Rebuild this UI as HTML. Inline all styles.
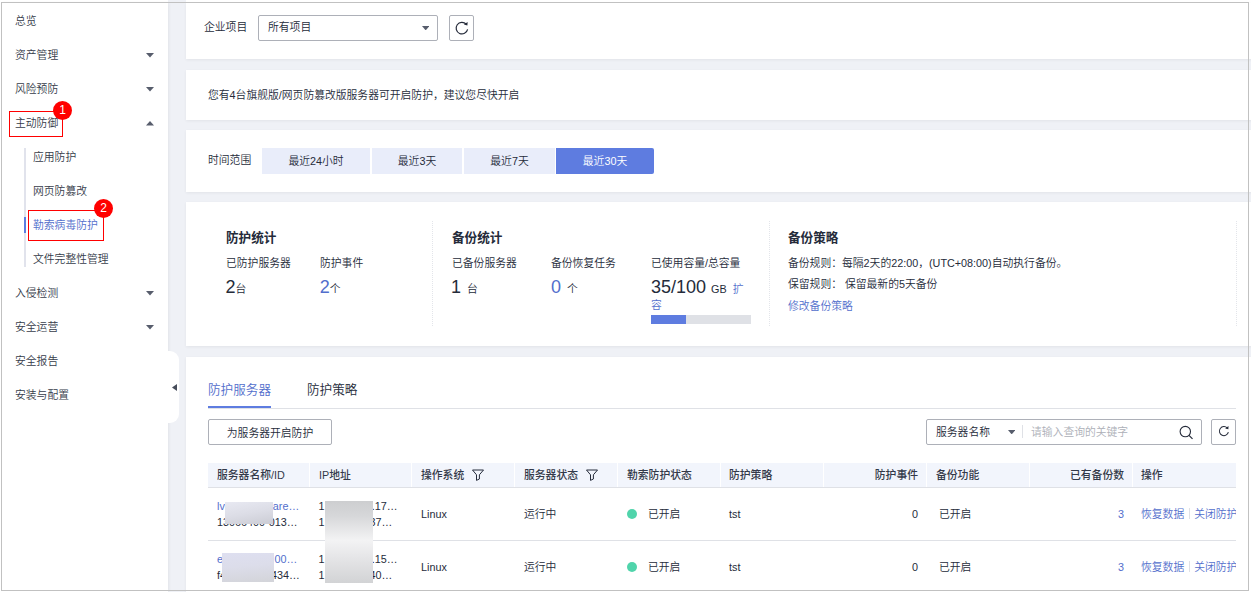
<!DOCTYPE html>
<html lang="zh-CN">
<head>
<meta charset="utf-8">
<title>勒索病毒防护</title>
<style>
*{box-sizing:border-box;margin:0;padding:0}
html,body{width:1251px;height:592px;overflow:hidden;background:#fff}
body{position:relative;font-weight:350;font-family:"Liberation Sans","Noto Sans CJK SC",sans-serif;font-size:10.8px;color:#252b3a;line-height:16px}
.a{position:absolute;white-space:nowrap}
#frame{left:1px;top:2px;width:1248px;height:589px;border:1px solid #c1c1c1;z-index:50;pointer-events:none}
#main{left:168px;top:3px;width:1083px;height:589px;background:#eff1f6;box-shadow:0 -3px 0 #eff1f6}
#side{left:2px;top:3px;width:166px;height:589px;background:#fff;box-shadow:1px 0 3px rgba(0,0,0,.06),0 -3px 0 #fff;z-index:5}
.panel{position:absolute;left:18px;width:1070px;background:#fff;box-shadow:0 1px 3px rgba(0,0,0,.06)}
.t{position:absolute;white-space:nowrap;height:16px;line-height:16px}
.blue,.m.blue{color:#526ecc}
.m{position:absolute;left:13px;height:16px;line-height:16px;white-space:nowrap;color:#363c4a}
.m2{left:31px}
.arr{position:absolute;left:144px;width:0;height:0;border-left:4px solid transparent;border-right:4px solid transparent}
.dn{border-top:4px solid #575d6c}
.up{border-bottom:4px solid #575d6c}
.rbox{position:absolute;border:1px solid #f00}
.badge{position:absolute;width:19px;height:19px;border-radius:50%;background:#f00;color:#fff;font-size:12px;font-weight:400;line-height:19px;text-align:center}

.tb{position:absolute;top:18px;height:26px;line-height:26px;text-align:center;background:#e9edfa;color:#252b3a;white-space:nowrap}
.tb.on{background:#5e7ce0;color:#fff;border-radius:0 2px 2px 0}
.vd{position:absolute;top:19px;width:0;height:105px;border-left:1px dotted #e3e5ea}
.h{font-size:12.6px;font-weight:bold}
.big{font-size:18px;height:22px;line-height:22px}
.big .u{font-size:10.8px}
.bl{color:#526ecc}

.tab{font-size:12.6px;height:18px;line-height:18px}
.th{font-weight:500;color:#333949}
.cs{position:absolute;top:0;width:1px;height:24px;background:#fff}
.dot{position:absolute;width:10px;height:10px;border-radius:50%;background:#50d4ab}
.sp{display:inline-block;width:1px;height:11px;background:#dfe1e6;margin:0 4px 0 5px;vertical-align:-1px}
.m.blue{color:#526ecc}
</style>
</head>
<body>
<div class="a" id="side">
  <div class="m" style="top:10px">总览</div>
  <div class="m" style="top:44px">资产管理</div><svg class="a" style="left:144px;top:50px" width="8" height="4.5" viewBox="0 0 8 4.5"><polygon points="0,0 8,0 4.0,4.5" fill="#575d6c"/></svg>
  <div class="m" style="top:78px">风险预防</div><svg class="a" style="left:144px;top:84px" width="8" height="4.5" viewBox="0 0 8 4.5"><polygon points="0,0 8,0 4.0,4.5" fill="#575d6c"/></svg>
  <div class="m" style="top:112px">主动防御</div><svg class="a" style="left:144px;top:118px" width="8" height="4.5" viewBox="0 0 8 4.5"><polygon points="0,4.5 8,4.5 4.0,0" fill="#575d6c"/></svg>
  <div class="a" style="left:22px;top:145px;width:2px;height:119px;background:#e1e3ec"></div>
  <div class="a" style="left:22px;top:214px;width:2px;height:16px;background:#5e7ce0"></div>
  <div class="m m2" style="top:146px">应用防护</div>
  <div class="m m2" style="top:180px">网页防篡改</div>
  <div class="m m2 blue" style="top:214px">勒索病毒防护</div>
  <div class="m m2" style="top:248px">文件完整性管理</div>
  <div class="m" style="top:282px">入侵检测</div><svg class="a" style="left:144px;top:288px" width="8" height="4.5" viewBox="0 0 8 4.5"><polygon points="0,0 8,0 4.0,4.5" fill="#575d6c"/></svg>
  <div class="m" style="top:316px">安全运营</div><svg class="a" style="left:144px;top:322px" width="8" height="4.5" viewBox="0 0 8 4.5"><polygon points="0,0 8,0 4.0,4.5" fill="#575d6c"/></svg>
  <div class="m" style="top:350px">安全报告</div>
  <div class="m" style="top:384px">安装与配置</div>
  <div class="rbox" style="left:7px;top:108px;width:54px;height:26px"></div>
  <div class="badge" style="left:51px;top:98px">1</div>
  <div class="rbox" style="left:26px;top:207px;width:76px;height:31px"></div>
  <div class="badge" style="left:92px;top:196px">2</div>
</div>
<div class="a" id="main">
  <!-- collapse handle -->
  <div class="a" style="left:0;top:348px;width:11px;height:72px;background:#fff;border-radius:0 9px 9px 0;z-index:6"></div>
  <svg class="a" style="left:3.5px;top:380.5px;z-index:7" width="5" height="7" viewBox="0 0 5 7"><polygon points="5,0 5,7 0,3.5" fill="#474d5b"/></svg>

  <div class="panel" id="p1" style="top:0;height:56px;box-shadow:0 1px 3px rgba(0,0,0,.06),0 -3px 0 #fff">
    <div class="t" style="left:18px;top:16px">企业项目</div>
    <div class="a" style="left:72px;top:12px;width:180px;height:26px;border:1px solid #adb0b8;border-radius:2px"></div>
    <div class="t" style="left:82px;top:16px">所有项目</div>
    <svg class="a" style="left:235.8px;top:23px" width="7.4" height="4.4" viewBox="0 0 7.4 4.4"><polygon points="0,0 7.4,0 3.7,4.4" fill="#575d6c"/></svg>
    <div class="a" style="left:263px;top:12px;width:25px;height:26px;border:1px solid #adb0b8;border-radius:2px"></div>
    <svg class="a" style="left:267px;top:16px" width="18" height="18" viewBox="0 0 18 18"><path d="M13.2 5.2 A5.8 5.8 0 1 0 14.6 10.4" fill="none" stroke="#252b3a" stroke-width="1.2"/><path d="M14.6 3.0 L14.4 6.6 L10.9 5.6 Z" fill="#252b3a"/></svg>
  </div>

  <div class="panel" id="p2" style="top:67px;height:50px">
    <div class="t" style="left:22px;top:17px">您有4台旗舰版/网页防篡改版服务器可开启防护，建议您尽快开启</div>
  </div>

  <div class="panel" id="p3" style="top:127px;height:62px">
    <div class="t" style="left:22px;top:22px">时间范围</div>
    <div class="tb" style="left:76px;width:108px">最近24小时</div>
    <div class="tb" style="left:186px;width:90px">最近3天</div>
    <div class="tb" style="left:278px;width:91px">最近7天</div>
    <div class="tb on" style="left:370px;width:98px">最近30天</div>
  </div>

  <div class="panel" id="p4" style="top:199px;height:144px">
    <div class="vd" style="left:246px"></div><div class="vd" style="left:583px"></div><div class="vd" style="left:1050px"></div>
    <div class="t h" style="left:40px;top:28px">防护统计</div>
    <div class="t" style="left:40px;top:53px">已防护服务器</div>
    <div class="t" style="left:134px;top:53px">防护事件</div>
    <div class="t big" style="left:39.6px;top:74px">2<span class="u">台</span></div>
    <div class="t big" style="left:133.7px;top:74px"><span class="bl">2</span><span class="u">个</span></div>
    <div class="t h" style="left:266px;top:28px">备份统计</div>
    <div class="t" style="left:266px;top:53px">已备份服务器</div>
    <div class="t" style="left:365px;top:53px">备份恢复任务</div>
    <div class="t" style="left:465px;top:53px">已使用容量/总容量</div>
    <div class="t big" style="left:265px;top:74px">1<span class="u" style="margin-left:6px">台</span></div>
    <div class="t big" style="left:365px;top:74px"><span class="bl">0</span><span class="u" style="margin-left:6px">个</span></div>
    <div class="t big" style="left:465px;top:74px">35/100<span class="u" style="margin-left:5px">GB</span><span class="u blue" style="margin-left:6px">扩</span></div>
    <div class="t blue" style="left:465px;top:95px">容</div>
    <div class="a" style="left:465px;top:113px;width:100px;height:9px;background:#dfe1e6"><div style="width:35px;height:9px;background:#5e7ce0"></div></div>
    <div class="t h" style="left:602px;top:28px">备份策略</div>
    <div class="t" style="left:602px;top:53px">备份规则：每隔2天的22:00，(UTC+08:00)自动执行备份。</div>
    <div class="t" style="left:602px;top:74px">保留规则：<span style="margin-left:3px">保留最新的5天备份</span></div>
    <div class="t blue" style="left:602px;top:96px">修改备份策略</div>
  </div>

  <div class="panel" id="p5" style="top:354px;height:240px">
    <div class="t tab blue" style="left:22px;top:24px">防护服务器</div>
    <div class="t tab" style="left:121px;top:24px">防护策略</div>
    <div class="a" style="left:22px;top:51px;width:1028px;height:1px;background:#dfe1e6"></div>
    <div class="a" style="left:22px;top:49px;width:63px;height:2px;background:#5e7ce0"></div>
    <div class="a" style="left:22px;top:62px;width:124px;height:26px;line-height:24px;padding-top:1px;border:1px solid #adb0b8;border-radius:2px;text-align:center">为服务器开启防护</div>
    <!-- search -->
    <div class="a" style="left:740px;top:62px;width:276px;height:26px;border:1px solid #adb0b8;border-radius:2px"></div>
    <div class="t" style="left:750px;top:67px">服务器名称</div>
    <svg class="a" style="left:821.8px;top:73px" width="7.4" height="4.4" viewBox="0 0 7.4 4.4"><polygon points="0,0 7.4,0 3.7,4.4" fill="#575d6c"/></svg>
    <div class="a" style="left:836px;top:68px;width:1px;height:13px;background:#dfe1e6"></div>
    <div class="t" style="left:845px;top:67px;color:#adb0b8">请输入查询的关键字</div>
    <svg class="a" style="left:992px;top:67px" width="16" height="16" viewBox="0 0 16 16"><circle cx="7.3" cy="7.6" r="5.2" fill="none" stroke="#252b3a" stroke-width="1.1"/><path d="M11 11.4 L14.5 14.9" stroke="#252b3a" stroke-width="1.2" fill="none"/></svg>
    <div class="a" style="left:1025px;top:62px;width:25px;height:26px;border:1px solid #adb0b8;border-radius:2px"></div>
    <svg class="a" style="left:1031px;top:67px" width="14" height="14" viewBox="0 0 18 18"><path d="M13.2 5.2 A5.8 5.8 0 1 0 14.6 10.4" fill="none" stroke="#252b3a" stroke-width="1.3"/><path d="M14.8 2.6 L14.6 6.9 L10.5 5.7 Z" fill="#252b3a"/></svg>
    <!-- table -->
    <div class="a" id="tbl" style="left:22px;top:106px;width:1028px;height:140px;overflow:hidden">
      <div class="a" style="left:0;top:0;width:1028px;height:24px;background:#f2f5fc"></div>
      <div class="a" style="left:0;top:24px;width:1028px;height:1px;background:#dfe1e6"></div>
      <div class="a" style="left:0;top:77px;width:1028px;height:1px;background:#dfe1e6"></div>
      <i class="cs" style="left:101px"></i><i class="cs" style="left:203px"></i><i class="cs" style="left:306px"></i><i class="cs" style="left:409px"></i><i class="cs" style="left:512px"></i><i class="cs" style="left:615px"></i><i class="cs" style="left:718px"></i><i class="cs" style="left:821px"></i><i class="cs" style="left:924px"></i>
      <div class="t th" style="left:9px;top:4px">服务器名称/ID</div>
      <div class="t th" style="left:111px;top:4px">IP地址</div>
      <div class="t th" style="left:213px;top:4px">操作系统</div>
      <div class="t th" style="left:316px;top:4px">服务器状态</div>
      <div class="t th" style="left:419px;top:4px">勒索防护状态</div>
      <div class="t th" style="left:521px;top:4px">防护策略</div>
      <div class="t th" style="right:318px;top:4px">防护事件</div>
      <div class="t th" style="left:728px;top:4px">备份功能</div>
      <div class="t th" style="right:112px;top:4px">已有备份数</div>
      <div class="t th" style="left:933px;top:4px">操作</div>
      <svg class="a" style="left:264px;top:6px" width="12" height="12" viewBox="0 0 12 12"><path d="M0.5 1 H11.5 L7.4 5.8 V10 L4.5 11.4 V5.8 Z" fill="none" stroke="#252b3a" stroke-width="1"/></svg>
      <svg class="a" style="left:378px;top:6px" width="12" height="12" viewBox="0 0 12 12"><path d="M0.5 1 H11.5 L7.4 5.8 V10 L4.5 11.4 V5.8 Z" fill="none" stroke="#252b3a" stroke-width="1"/></svg>
      <!-- row 1 -->
      <div class="t blue" style="left:9px;top:35px">lv<span style="margin-left:48px">are…</span></div>
      <div class="t" style="left:9px;top:51px">13066400-013…</div>
      <div class="t" style="left:110.5px;top:35px">1<span style="margin-left:47.3px">.17…</span></div>
      <div class="t" style="left:110.5px;top:51px">1<span style="margin-left:45.1px">37…</span></div>
      <div class="t" style="left:213px;top:43px">Linux</div>
      <div class="t" style="left:316px;top:43px">运行中</div>
      <div class="dot" style="left:419px;top:46px"></div>
      <div class="t" style="left:440px;top:43px">已开启</div>
      <div class="t" style="left:521px;top:43px">tst</div>
      <div class="t" style="right:318px;top:43px">0</div>
      <div class="t" style="left:731px;top:43px">已开启</div>
      <div class="t blue" style="right:112px;top:43px">3</div>
      <div class="t blue" style="left:933px;top:43px">恢复数据<span class="sp"></span>关闭防护</div>
      <!-- row 2 -->
      <div class="t blue" style="left:9px;top:88px">e<span style="margin-left:51.4px">00…</span></div>
      <div class="t" style="left:9px;top:104px">f4<span style="margin-left:44.9px">434…</span></div>
      <div class="t" style="left:110.5px;top:88px">1<span style="margin-left:47.3px">.15…</span></div>
      <div class="t" style="left:110.5px;top:104px">1<span style="margin-left:45.1px">40…</span></div>
      <div class="t" style="left:213px;top:96px">Linux</div>
      <div class="t" style="left:316px;top:96px">运行中</div>
      <div class="dot" style="left:419px;top:99px"></div>
      <div class="t" style="left:440px;top:96px">已开启</div>
      <div class="t" style="left:521px;top:96px">tst</div>
      <div class="t" style="right:318px;top:96px">0</div>
      <div class="t" style="left:731px;top:96px">已开启</div>
      <div class="t blue" style="right:112px;top:96px">3</div>
      <div class="t blue" style="left:933px;top:96px">恢复数据<span class="sp"></span>关闭防护</div>
      <!-- blur masks -->
      <div class="a" style="left:17px;top:39px;width:48px;height:22px;background:linear-gradient(170deg,#e8e9f2,#dcdde6 50%,#cbccd4)"></div>
      <div class="a" style="left:14px;top:90px;width:52px;height:29px;background:linear-gradient(175deg,#dedff0,#dcddea 45%,#d3d4d9)"></div>
      <div class="a" style="left:117px;top:38px;width:48px;height:82px;background:linear-gradient(#cdced0 0%,#d6d7d9 18%,#f3f3f4 48%,#e6e6e8 68%,#d2d3d5 100%)"></div>
    </div>
  </div>
</div>
<div class="a" id="frame"></div>
</body>
</html>
